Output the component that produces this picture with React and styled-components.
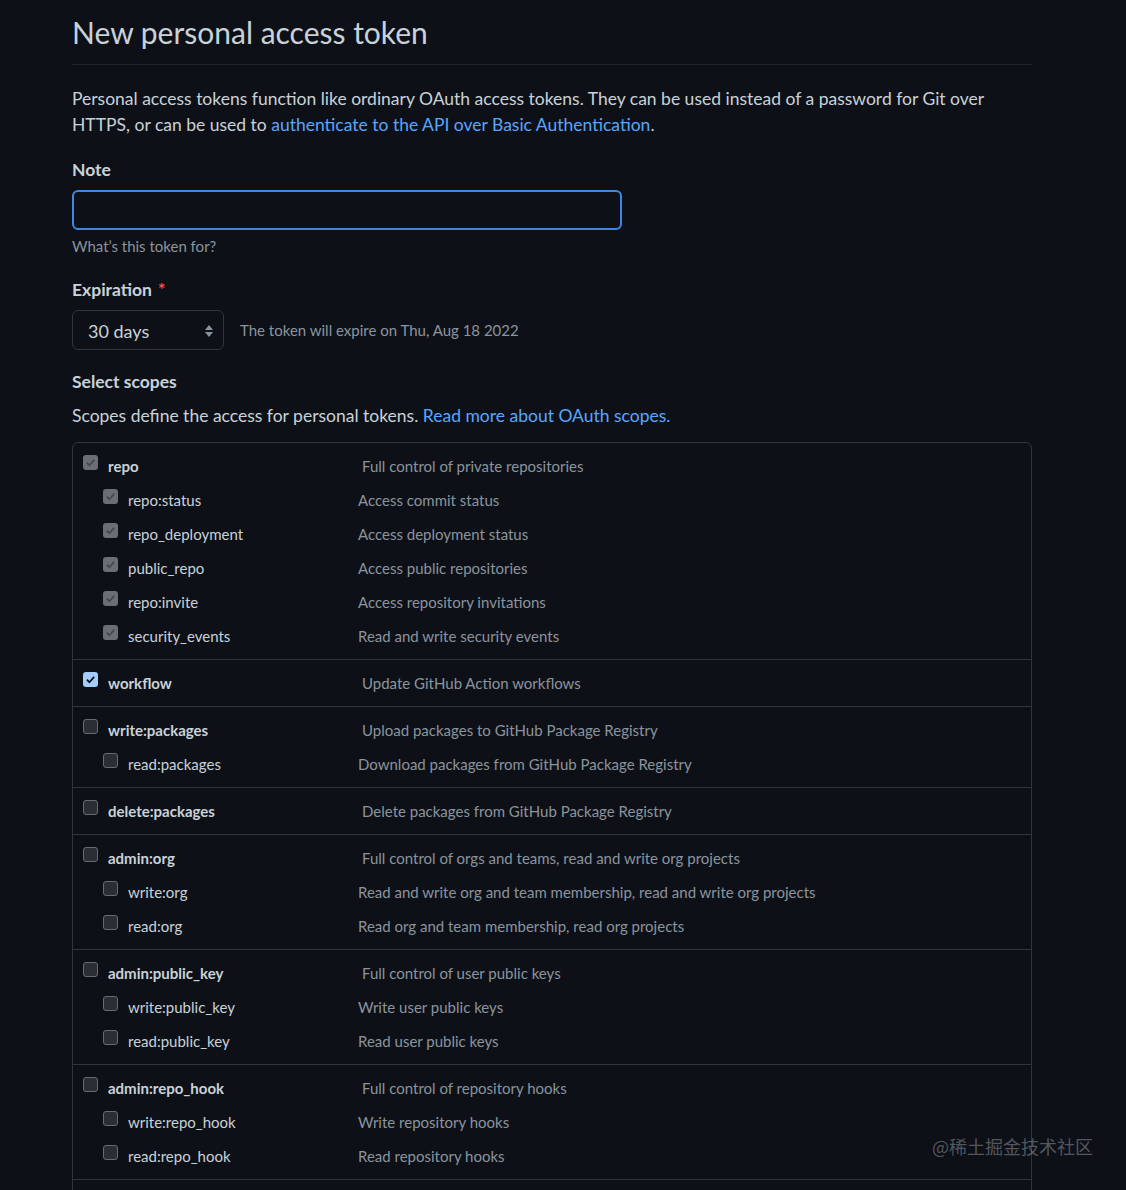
import styled, { createGlobalStyle } from "styled-components";

const GlobalStyle = createGlobalStyle`
  body {
    margin: 0;
    background: #0d1117;
    color: #c9d1d9;
    font-family: Lato, "Noto Sans", "Noto Sans CJK SC", sans-serif;
    font-size: 17.5px;
    line-height: 1.5;
  }
`;

const Page = styled.div`
  width: 960px;
  padding: 14px 0 40px 72px;
`;

const Title = styled.h1`
  margin: 0;
  padding-bottom: 12px;
  font-size: 30px;
  font-weight: 400;
  line-height: 1.25;
  border-bottom: 1px solid #21262d;
`;

const Intro = styled.p`
  margin: 21px 0 0;
  line-height: 26.6px;
`;

const Link = styled.a`
  color: #58a6ff;
  text-decoration: none;
`;

const Label = styled.div`
  margin-top: ${(p) => p.$top || 20}px;
  font-weight: 700;
  line-height: 26px;
`;

const Required = styled.span`
  color: #f85149;
  margin-left: 6px;
`;

const TextInput = styled.input`
  display: block;
  box-sizing: border-box;
  width: 550px;
  height: 40px;
  margin-top: 7px;
  background: #0d1117;
  border: 2px solid #3f86e6;
  border-radius: 6px;
  outline: none;
`;

const Hint = styled.div`
  margin-top: 5px;
  font-size: 15px;
  line-height: 22px;
  color: #8b949e;
`;

const ExpireRow = styled.div`
  display: flex;
  align-items: center;
  gap: 16px;
  margin-top: 7px;
`;

const Select = styled.div`
  box-sizing: border-box;
  width: 152px;
  height: 40px;
  display: flex;
  align-items: center;
  justify-content: space-between;
  padding: 2px 9px 0 15px;
  border: 1px solid #30363d;
  border-radius: 6px;
  font-size: 18px;
`;

const Muted = styled.span`
  font-size: 15px;
  color: #8b949e;
`;

const Sub = styled.p`
  margin: 8px 0 0;
  line-height: 26.6px;
`;

const ScopeBox = styled.div`
  margin-top: 12px;
  border: 1px solid #30363d;
  border-radius: 6px;
`;

const Group = styled.div`
  padding: 6px 0;
  & + & {
    border-top: 1px solid #30363d;
  }
`;

const Row = styled.div`
  display: flex;
  align-items: center;
  min-height: 34px;
  padding-left: ${(p) => (p.$child ? 30 : 10)}px;
  font-size: 15px;
`;

const Box = styled.span`
  flex: none;
  box-sizing: border-box;
  width: 15px;
  height: 15px;
  margin: 0 10px 6px 0;
  border-radius: 3px;
  display: flex;
  align-items: center;
  justify-content: center;
  background: ${(p) =>
    p.$state === "locked" ? "#6b6e73" : p.$state === "on" ? "#a3cdfb" : "#2b2e33"};
  border: 1px solid
    ${(p) => (p.$state === "off" ? "#686c72" : "transparent")};
`;

const Name = styled.span`
  width: ${(p) => (p.$child ? 230 : 254)}px;
  font-weight: ${(p) => (p.$child ? 400 : 700)};
  color: #c9d1d9;
`;

const Desc = styled.span`
  color: #8b949e;
`;

const Watermark = styled.div`
  position: absolute;
  top: 1133px;
  right: 33px;
  font-size: 18px;
  color: rgba(200, 205, 212, 0.38);
  font-family: "Noto Sans CJK SC", sans-serif;
`;

const scopes = [
  {
    name: "repo",
    desc: "Full control of private repositories",
    state: "locked",
    children: [
      ["repo:status", "Access commit status"],
      ["repo_deployment", "Access deployment status"],
      ["public_repo", "Access public repositories"],
      ["repo:invite", "Access repository invitations"],
      ["security_events", "Read and write security events"],
    ],
  },
  { name: "workflow", desc: "Update GitHub Action workflows", state: "on", children: [] },
  {
    name: "write:packages",
    desc: "Upload packages to GitHub Package Registry",
    children: [["read:packages", "Download packages from GitHub Package Registry"]],
  },
  { name: "delete:packages", desc: "Delete packages from GitHub Package Registry", children: [] },
  {
    name: "admin:org",
    desc: "Full control of orgs and teams, read and write org projects",
    children: [
      ["write:org", "Read and write org and team membership, read and write org projects"],
      ["read:org", "Read org and team membership, read org projects"],
    ],
  },
  {
    name: "admin:public_key",
    desc: "Full control of user public keys",
    children: [
      ["write:public_key", "Write user public keys"],
      ["read:public_key", "Read user public keys"],
    ],
  },
  {
    name: "admin:repo_hook",
    desc: "Full control of repository hooks",
    children: [
      ["write:repo_hook", "Write repository hooks"],
      ["read:repo_hook", "Read repository hooks"],
    ],
  },
  { name: "admin:org_hook", desc: "Full control of organization hooks", children: [] },
  { name: "gist", desc: "Create gists", children: [] },
];

const Check = ({ state }) => (
  <Box $state={state}>
    {state !== "off" && (
      <svg width="11" height="11" viewBox="0 0 12 12">
        <path
          d="M2 6.2 L4.8 9 L10 3.2"
          fill="none"
          stroke={state === "on" ? "#0d1117" : "#45484d"}
          strokeWidth="2"
        />
      </svg>
    )}
  </Box>
);

const Arrows = () => (
  <svg width="10" height="14" viewBox="0 0 10 14">
    <path d="M5 1 L9 6 H1 Z M5 13 L1 8 H9 Z" fill="#8b949e" />
  </svg>
);

export default function App() {
  return (
    <>
      <GlobalStyle />
      <Page>
        <Title>New personal access token</Title>
        <Intro>
          Personal access tokens function like ordinary OAuth access tokens. They can be used
          instead of a password for Git over HTTPS, or can be used to{" "}
          <Link href="#">authenticate to the API over Basic Authentication</Link>.
        </Intro>

        <Label $top={18.5}>Note</Label>
        <TextInput />
        <Hint>What’s this token for?</Hint>

        <Label>
          Expiration<Required>*</Required>
        </Label>
        <ExpireRow>
          <Select>
            30 days
            <Arrows />
          </Select>
          <Muted>The token will expire on Thu, Aug 18 2022</Muted>
        </ExpireRow>

        <Label $top={19}>Select scopes</Label>
        <Sub>
          Scopes define the access for personal tokens.{" "}
          <Link href="#">Read more about OAuth scopes.</Link>
        </Sub>

        <ScopeBox>
          {scopes.map((s) => {
            const st = s.state || "off";
            return (
              <Group key={s.name}>
                <Row>
                  <Check state={st} />
                  <Name>{s.name}</Name>
                  <Desc>{s.desc}</Desc>
                </Row>
                {s.children.map(([n, d]) => (
                  <Row $child key={n}>
                    <Check state={st === "locked" ? "locked" : "off"} />
                    <Name $child>{n}</Name>
                    <Desc>{d}</Desc>
                  </Row>
                ))}
              </Group>
            );
          })}
        </ScopeBox>
      </Page>
      <Watermark>@稀土掘金技术社区</Watermark>
    </>
  );
}
